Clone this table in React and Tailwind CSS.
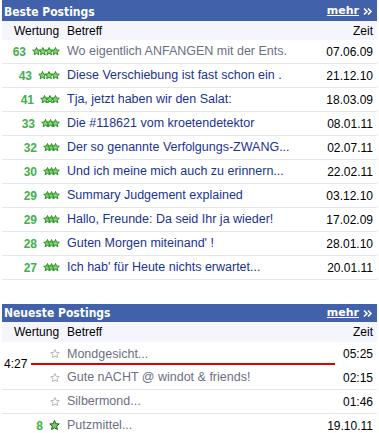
import React from "react";

const StarShape = ({ x, fill, stroke, size = 8 }) => {
  const s = size / 2;
  const pts = [];
  for (let i = 0; i < 10; i++) {
    const r = i % 2 === 0 ? s : s * 0.45;
    const a = (Math.PI / 5) * i - Math.PI / 2;
    pts.push(`${(x + s + r * Math.cos(a)).toFixed(2)},${(s + 0.5 + r * Math.sin(a)).toFixed(2)}`);
  }
  return <polygon points={pts.join(" ")} fill={fill} stroke={stroke} strokeWidth="1" strokeLinejoin="round" />;
};

const Stars = ({ count, width }) => {
  const size = 8;
  const step = count > 1 ? (width - size - 1) / (count - 1) : 0;
  const items = [];
  for (let i = 0; i < count; i++) items.push(i);
  return (
    <svg width={width} height="10" viewBox={`0 0 ${width} 10`} className="block">
      {items.map((i) => (
        <StarShape key={i} x={0.5 + i * step} fill="#7ddc6e" stroke="#2f8a2a" size={size} />
      ))}
    </svg>
  );
};

const EmptyStar = () => (
  <svg width="10" height="10" viewBox="0 0 10 10" className="block">
    <StarShape x={0.5} fill="#ffffff" stroke="#b8b8b8" size={9} />
  </svg>
);

const GreenStar = () => (
  <svg width="11" height="11" viewBox="0 0 11 11" className="block">
    <StarShape x={0.5} fill="#6fd05e" stroke="#1f5f1c" size={10} />
  </svg>
);

const best = [
  { n: 63, c: 4, w: 28, t: "Wo eigentlich ANFANGEN mit der Ents.", d: "07.06.09", gray: true },
  { n: 43, c: 3, w: 22, t: "Diese Verschiebung ist fast schon ein .", d: "21.12.10" },
  { n: 41, c: 3, w: 20, t: "Tja, jetzt haben wir den Salat:", d: "18.03.09" },
  { n: 33, c: 3, w: 19, t: "Die #118621 vom kroetendetektor", d: "08.01.11" },
  { n: 32, c: 3, w: 17, t: "Der so genannte Verfolgungs-ZWANG...", d: "02.07.11" },
  { n: 30, c: 3, w: 17, t: "Und ich meine mich auch zu erinnern...", d: "22.02.11" },
  { n: 29, c: 3, w: 17, t: "Summary Judgement explained", d: "03.12.10" },
  { n: 29, c: 3, w: 17, t: "Hallo, Freunde: Da seid Ihr ja wieder!", d: "17.02.09" },
  { n: 28, c: 3, w: 17, t: "Guten Morgen miteinand' !", d: "28.01.10" },
  { n: 27, c: 3, w: 17, t: "Ich hab' für Heute nichts erwartet...", d: "20.01.11" },
];

const newest = [
  { n: null, t: "Mondgesicht...", d: "05:25", marker: true },
  { n: null, t: "Gute nACHT @ windot & friends!", d: "02:15" },
  { n: null, t: "Silbermond...", d: "01:46" },
  { n: 8, t: "Putzmittel...", d: "19.10.11" },
];

const Header = ({ title, h, pt }) => (
  <div className={`flex justify-between items-center bg-[#4161ab] text-white ${h} ${pt}`}>
    <span className="pl-[2px] font-bold text-[12px]" style={{ fontFamily: "'DejaVu Sans Condensed', 'DejaVu Sans', sans-serif" }}>
      {title}
    </span>
    <span className="flex items-center pr-[3px]">
      <span className="font-bold text-[11px] underline" style={{ fontFamily: "'DejaVu Sans', sans-serif" }}>mehr</span>
      <svg width="10" height="9" viewBox="0 0 10 9" className="ml-[4px] mr-[1px]">
        <path d="M1 1.5 L4 4.5 L1 7.5 M5 1.5 L8 4.5 L5 7.5" stroke="#fff" strokeWidth="1.6" fill="none" />
      </svg>
    </span>
  </div>
);

const ColHeader = ({ h }) => (
  <div className={`flex items-center bg-[#f5f6fd] text-[12px] text-black ${h}`}>
    <span className="pl-[12px] w-[65px]">Wertung</span>
    <span className="flex-1">Betreff</span>
    <span className="pr-[4px]">Zeit</span>
  </div>
);

export default function App() {
  return (
    <div className="w-[379px] h-[433px] bg-white overflow-hidden px-[2px] relative" style={{ fontFamily: "'Liberation Sans', Arial, sans-serif" }}>
      <Header title="Beste Postings" h="h-[21px]" pt="pt-[2px]" />
      <ColHeader h="h-[19px]" />
      {best.map((r, i) => (
        <div key={i} className="flex items-center h-[24px] border-b border-[#e6e7eb] text-[12px]">
          <div className="w-[58px] flex justify-end items-center gap-[6px]">
            <span className="font-bold text-[#46b04c]">{r.n}</span>
            <Stars count={r.c} width={r.w} />
          </div>
          <span className={`flex-1 pl-[7px] whitespace-nowrap text-[12.5px] ${r.gray ? "text-[#6b6f82]" : "text-[#1a3391]"}`}>{r.t}</span>
          <span className="pr-[4px] text-black">{r.d}</span>
        </div>
      ))}
      <div className="h-[24px]" />
      <Header title="Neueste Postings" h="h-[18px]" pt="" />
      <ColHeader h="h-[20px]" />
      {newest.map((r, i) => (
        <div key={i} className={`flex items-center h-[24px] text-[12px] ${r.marker ? "" : "border-b border-[#e6e7eb]"}`}>
          <div className="w-[58px] flex justify-end items-center gap-[6px]">
            {r.n !== null ? (
              <>
                <span className="font-bold text-[#46b04c]">{r.n}</span>
                <GreenStar />
              </>
            ) : (
              <EmptyStar />
            )}
          </div>
          <span className="flex-1 pl-[7px] whitespace-nowrap text-[12.5px] text-[#6b6f82]">{r.t}</span>
          <span className="pr-[4px] text-black">{r.d}</span>
        </div>
      ))}
      <div className="absolute left-[4px] top-[357px] flex items-center">
        <span className="text-[12px] text-black leading-[14px]">4:27</span>
        <div className="ml-[4px] w-[304px] h-[2px] bg-[#e00000]" />
      </div>
    </div>
  );
}
